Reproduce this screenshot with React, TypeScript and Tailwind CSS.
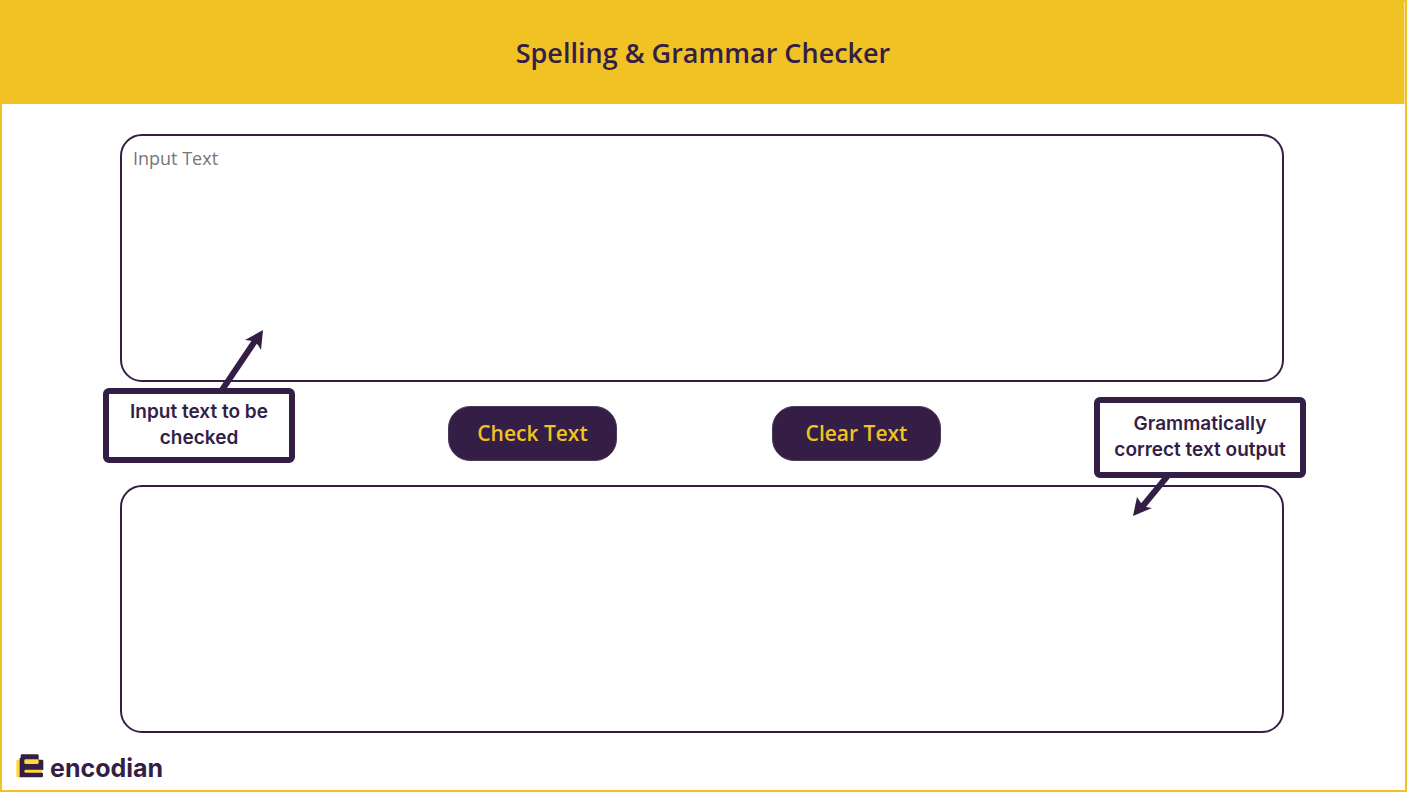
function Logo() {
  return (
    <a href="#" className="flex w-fit items-center gap-1.5">
      <svg viewBox="0 0 84 72" className="h-6 w-7" aria-hidden="true">
        <path d="M4 17H14V70H4Q1 70 1 66V21Q1 17 4 17Z" fill="#ffd83b" />
        <path d="M17 1H64Q68 1 68 5V17H78Q82 17 82 21V45Q82 49 78 49V56Q81 56 81 59V66Q81 70 77 70H11V12H14V5Q14 1 17 1Z" fill="#341e46" />
        <path d="M29 16H64Q68 16 68 20V26Q68 30 64 30H29Q25 30 25 26V20Q25 16 29 16Z" fill="#ffd83b" />
        <path d="M29 47H78V56H29Q25 56 25 52Q25 47 29 47Z" fill="#ffd83b" />
      </svg>
      <span className="pt-1 text-[25px] leading-6 font-bold">encodian</span>
    </a>
  );
}

function ActionButton({ label, onClick }: { label: string; onClick?: () => void }) {
  return (
    <button
      type="button"
      onClick={onClick}
      className="h-[55px] w-[169px] rounded-[22px] border border-[#4b3a5c] bg-[#341e46] font-['Open_Sans',sans-serif] text-[21px] font-semibold text-[#f0c224]"
    >
      {label}
    </button>
  );
}

export default function App() {
  return (
    <div className="flex min-h-screen flex-col border-2 border-[#f0c224] bg-white font-['Open_Sans',sans-serif] text-[#341e46]">
      <header className="flex h-[102px] items-center justify-center border-r border-[#f8e3a0] bg-[#f0c224]">
        <h1 className="text-[27px] leading-10 font-semibold">Spelling &amp; Grammar Checker</h1>
      </header>

      <main className="flex flex-1 flex-col pt-[30px] pr-[121px] pl-[118px]">
        <textarea
          aria-label="Input Text"
          placeholder="Input Text"
          className="block h-[248px] w-full resize-none rounded-[22px] border-2 border-[#341e46] px-[11px] py-[9px] text-[18px] outline-none placeholder:text-[#767676]"
        />

        <div className="relative flex h-[103px] items-center justify-center gap-[155px] pr-[15px]">
          <ActionButton label="Check Text" />
          <ActionButton label="Clear Text" />

          {/* Callout for the input box */}
          <svg viewBox="0 0 50 64" className="absolute top-[-54px] left-[97px] h-16 w-[50px]" aria-hidden="true">
            <path d="M5 62L38 13" stroke="#341e46" strokeWidth="6" />
            <path d="M46 2L28 12L36 13L41 17L44 22Z" fill="#341e46" />
          </svg>
          <p className="absolute top-1.5 left-[-17px] flex h-[75px] w-[192px] items-center justify-center rounded-md border-6 border-[#341e46] bg-white px-3 pb-0.5 text-center font-[Inter,sans-serif] text-[19px] leading-[26px] font-semibold">
            Input text to be checked
          </p>

          {/* Callout for the output box */}
          <svg viewBox="0 0 50 50" className="absolute top-[89px] right-[106px] z-10 size-[50px]" aria-hidden="true">
            <path d="M42 2L14 36" stroke="#341e46" strokeWidth="6" />
            <path d="M5 45L9 26L13 32L18 36L24 37Z" fill="#341e46" />
          </svg>
          <p className="absolute top-[15px] right-[-22px] z-10 flex h-[81px] w-[212px] items-center justify-center rounded-md border-6 border-[#341e46] bg-white px-2 pb-0.5 text-center font-[Inter,sans-serif] text-[19px] leading-[26px] font-semibold">
            Grammatically correct text output
          </p>
        </div>

        <textarea
          aria-label="Corrected text"
          readOnly
          className="block h-[248px] w-full resize-none rounded-[22px] border-2 border-[#341e46] px-[11px] py-[9px] text-[18px] outline-none"
        />
      </main>

      <footer className="px-3.5 pb-2.5 font-[Inter,sans-serif]">
        <Logo />
      </footer>
    </div>
  );
}
